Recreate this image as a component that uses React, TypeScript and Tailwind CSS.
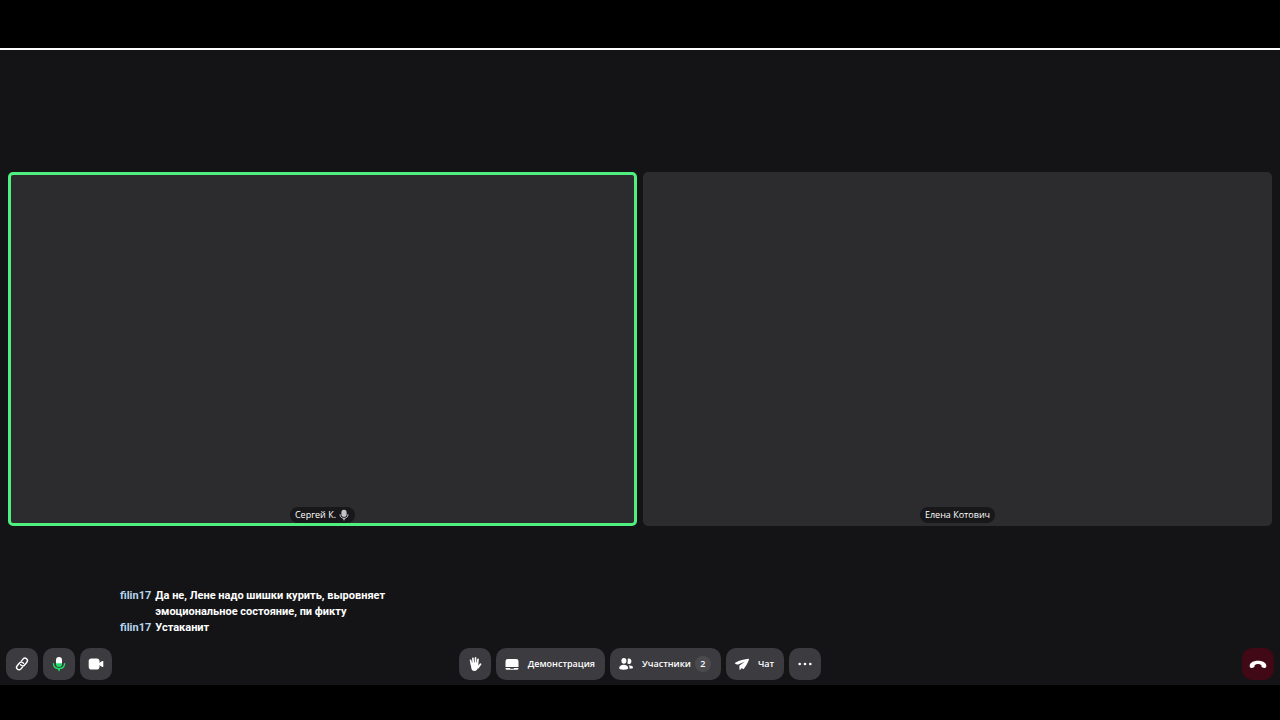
import type { ReactNode } from "react";

type IconProps = { children: ReactNode; className?: string };

function Icon({ children, className = "size-4" }: IconProps) {
  return (
    <svg viewBox="0 0 16 16" fill="currentColor" aria-hidden="true" className={`shrink-0 ${className}`}>
      {children}
    </svg>
  );
}

function LinkIcon() {
  return (
    <Icon>
      <g transform="rotate(-50 8 8)" fill="none" stroke="currentColor" strokeWidth="1.4" strokeLinecap="round">
        <path d="M6.200 10.400H3.600a2.500 2.500 0 0 1 0-5h3.500a2.500 2.500 0 0 1 2.400 3.300" />
        <path d="M9.800 5.600h2.600a2.500 2.500 0 0 1 0 5H8.900A2.500 2.500 0 0 1 6.500 7.300" />
      </g>
    </Icon>
  );
}

function ActiveMicIcon() {
  return (
    <Icon>
      <path d="M5 4a3 3 0 0 1 6 0v4H5z" />
      <path d="M5 7.300h6V8a3 3 0 0 1-6 0z" fill="#20e06a" />
      <path d="M2.400 7.600c.2 3.200 2.600 5 5.600 5s5.400-1.800 5.600-5" fill="none" stroke="#20e06a" strokeWidth="1.300" strokeLinecap="round" />
      <path d="M6.600 12.300h2.800L8.500 15a.55.55 0 0 1-1 0z" fill="#20e06a" />
    </Icon>
  );
}

function CameraIcon() {
  return (
    <Icon>
      <rect x="0.700" y="2.500" width="10.800" height="11" rx="2.800" />
      <path d="M11 7l3.300-2c.5-.3 1 0 1 .5v5c0 .5-.5.800-1 .5L11 9z" />
    </Icon>
  );
}

function HandIcon() {
  return (
    <Icon>
      <g fill="none" stroke="currentColor" strokeLinecap="round" strokeWidth="1.700">
        <path d="M3.600 4.400l1 5M5.900 2.300l.5 6M8.500 1.800v6M11 3.300l-.6 5.500" />
        <path d="M13.400 8.300l-2.500 3.300" strokeWidth="1.900" />
      </g>
      <path d="M3.900 6.500h7l.5 4.500c-1 2.500-2 3.900-4 3.900-2.200 0-3-1.500-3.300-4z" />
    </Icon>
  );
}

function ScreenIcon() {
  return (
    <Icon>
      <path d="M3.800 3h8.400A2.300 2.300 0 0 1 14.500 5.300V11h-13V5.300A2.300 2.300 0 0 1 3.800 3z" />
      <path d="M1.500 12h4.300l.5.700h3.400l.5-.7h4.300v.3a1.500 1.500 0 0 1-1.500 1.500H3a1.500 1.500 0 0 1-1.500-1.500z" />
    </Icon>
  );
}

function PeopleIcon() {
  return (
    <Icon>
      <ellipse cx="5.900" cy="4.800" rx="2.500" ry="2.900" />
      <path d="M5.700 8.700c2.700 0 4.500 1.500 4.500 3.300 0 1.300-1.200 1.700-4.500 1.700s-4.500-.4-4.500-1.700c0-1.800 1.800-3.300 4.500-3.300z" />
      <path d="M9.600 2.900c1.800-1 3.800.1 3.800 2.300 0 1.700-1 2.900-2.300 2.900-.9 0-1.500-.4-1.900-1 .7-1.400.8-2.800.4-4.200z" />
      <path d="M10.600 9.600c2.600-.3 4.400.6 4.400 2 0 .9-.9 1.100-3.500 1.100.2-1.200 0-2.200-.9-3.100z" />
    </Icon>
  );
}

function PlaneIcon() {
  return (
    <Icon>
      <path d="M15.200 2.800C10.500 3 5 4.500.7 6.900c.9 1 2.100 1.500 3.600 1.500l6.500-2.900-5.500 4.200.3 4.300c1-.3 1.700-1 2.200-2l1.700 1.200c2.300-2.800 4.500-6.200 5.700-10.400z" />
    </Icon>
  );
}

function MoreIcon() {
  return (
    <Icon>
      <circle cx="2.700" cy="8" r="1.300" />
      <circle cx="8" cy="8" r="1.300" />
      <circle cx="13.300" cy="8" r="1.300" />
    </Icon>
  );
}

function HangUpIcon() {
  return (
    <Icon className="size-[18px]">
      <path d="M8 5c4.400 0 7.400 1.900 7.400 4.600 0 1.200-.4 1.900-1.300 1.900-.8 0-1.900-.2-2.500-.6-.6-.4-.5-1.200-.6-1.900-.8-.7-1.800-1-3-1s-2.200.3-3 1c-.1.700 0 1.500-.6 1.900-.6.4-1.700.6-2.500.6-.9 0-1.300-.7-1.300-1.900C.6 6.900 3.600 5 8 5z" />
    </Icon>
  );
}

function SmallMicIcon() {
  return (
    <Icon className="size-3 text-[#c4c4c8]">
      <rect x="4.500" y="1" width="7" height="9.500" rx="3.500" />
      <path d="M2.600 7.500c.2 3.200 2.500 5 5.400 5s5.200-1.800 5.400-5" fill="none" stroke="currentColor" strokeWidth="1.300" strokeLinecap="round" />
      <path d="M6.600 12.200h2.800L8.500 15a.55.55 0 0 1-1 0z" />
    </Icon>
  );
}

function IconButton({ label, danger = false, children }: { label: string; danger?: boolean; children: ReactNode }) {
  return (
    <button
      type="button"
      aria-label={label}
      className={`grid size-8 place-items-center rounded-[10px] ${danger ? "bg-[#410815]" : "bg-[#3c3c40]"}`}
    >
      {children}
    </button>
  );
}

function TextButton({ icon, label, count }: { icon: ReactNode; label: string; count?: number }) {
  return (
    <button
      type="button"
      className="flex h-8 items-center rounded-[10px] bg-[#3c3c40] pr-2.5 pl-2 text-[9px] font-semibold whitespace-nowrap"
    >
      {icon}
      <span className="pl-2">{label}</span>
      {count !== undefined && (
        <span className="ml-1 grid size-4 place-items-center rounded-full bg-[#4b4b4f]">{count}</span>
      )}
    </button>
  );
}

function Tile({ name, speaking = false }: { name: string; speaking?: boolean }) {
  return (
    <article
      className={`flex aspect-video items-end justify-center rounded-[5px] border-3 bg-[#2c2c2f] ${
        speaking ? "border-[#50f080]" : "border-[#2c2c2f]"
      }`}
    >
      <h2 className="flex h-4 items-center gap-0.5 rounded-full bg-[#18181a] px-[5px] text-[9px] font-medium">
        {name}
        {speaking && <SmallMicIcon />}
      </h2>
    </article>
  );
}

const messages = [
  { author: "filin17", text: "Да не, Лене надо шишки курить, выровняет эмоциональное состояние, пи фикту" },
  { author: "filin17", text: "Устаканит" },
];

export default function App() {
  return (
    <div className="flex min-h-screen flex-col bg-black pt-12 pb-[35px] font-['Open_Sans','Noto_Sans',sans-serif] text-white">
      <main className="relative flex flex-1 flex-col border-t-2 border-white bg-[#141416]">
        <section className="grid flex-1 grid-cols-2 content-center gap-1.5 px-2">
          <Tile name="Сергей К." speaking />
          <Tile name="Елена Котович" />
        </section>

        <ul className="absolute bottom-[49px] left-[120px] w-[270px] font-[Roboto,sans-serif] text-[11px] leading-4 font-bold">
          {messages.map((message) => (
            <li key={message.text} className="flex gap-1">
              <span className="text-[#b5d5f0]">{message.author}</span>
              <p>{message.text}</p>
            </li>
          ))}
        </ul>

        <footer className="grid grid-cols-[1fr_auto_1fr] px-1.5 pb-[5px]">
          <div className="flex gap-[5px]">
            <IconButton label="Ссылка"><LinkIcon /></IconButton>
            <IconButton label="Микрофон"><ActiveMicIcon /></IconButton>
            <IconButton label="Камера"><CameraIcon /></IconButton>
          </div>
          <div className="flex gap-[5px]">
            <IconButton label="Поднять руку"><HandIcon /></IconButton>
            <TextButton icon={<ScreenIcon />} label="Демонстрация" />
            <TextButton icon={<PeopleIcon />} label="Участники" count={2} />
            <TextButton icon={<PlaneIcon />} label="Чат" />
            <IconButton label="Ещё"><MoreIcon /></IconButton>
          </div>
          <div className="flex justify-end">
            <IconButton label="Завершить звонок" danger><HangUpIcon /></IconButton>
          </div>
        </footer>
      </main>
    </div>
  );
}
